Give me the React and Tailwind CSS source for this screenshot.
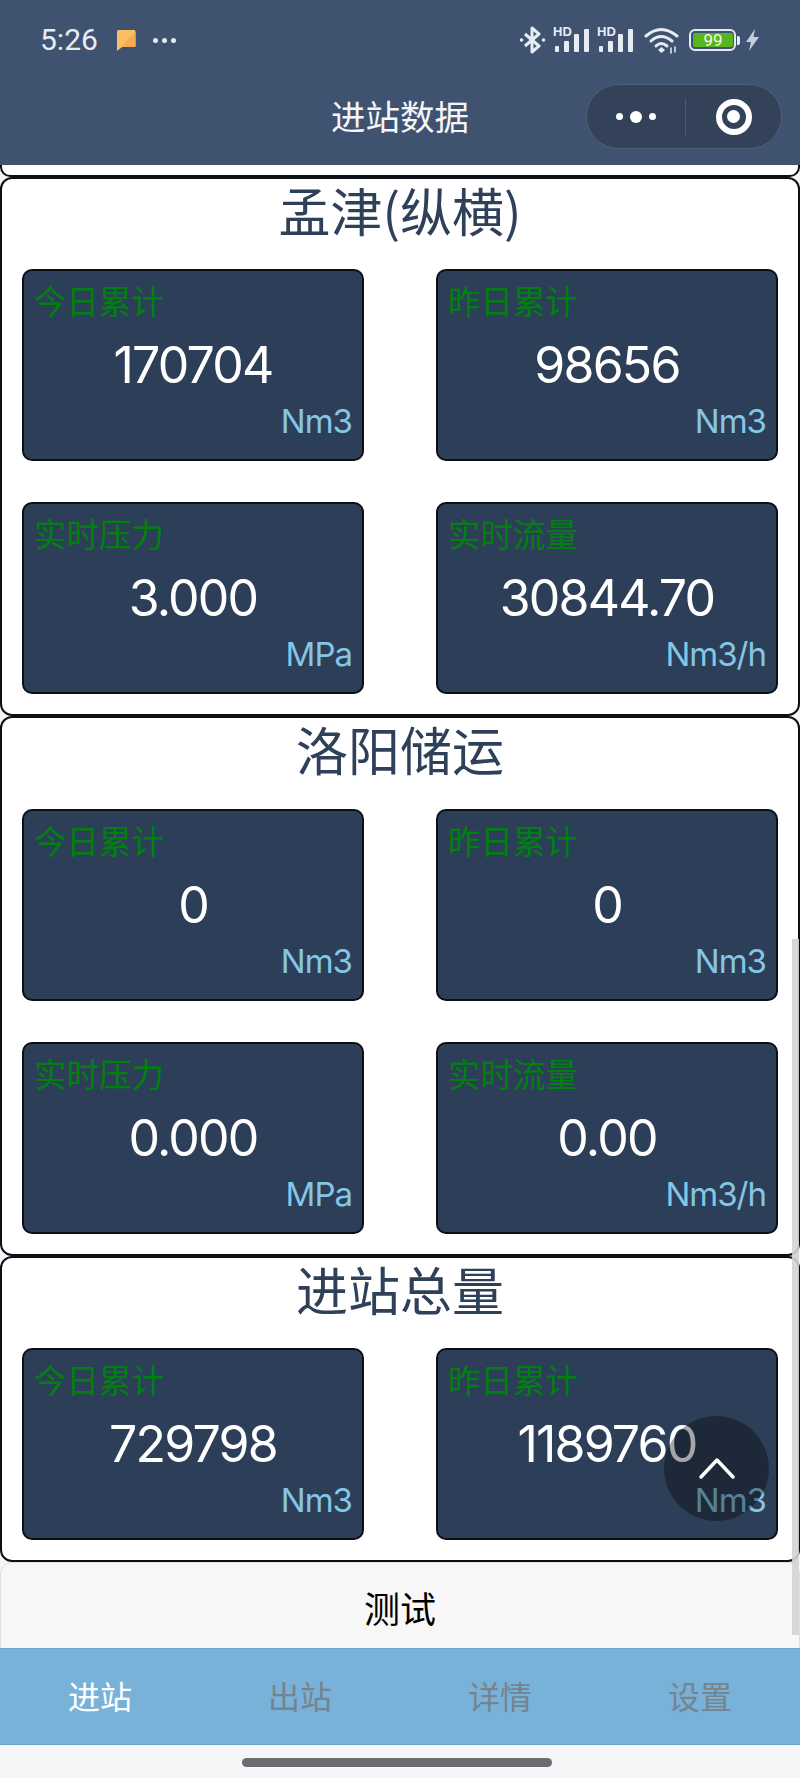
import React from 'react'

const CJK = '"Noto Sans CJK SC", sans-serif'

const stations = [
  {
    name: '孟津(纵横)',
    stats: [
      { label: '今日累计', value: '170704', unit: 'Nm3' },
      { label: '昨日累计', value: '98656', unit: 'Nm3' },
      { label: '实时压力', value: '3.000', unit: 'MPa' },
      { label: '实时流量', value: '30844.70', unit: 'Nm3/h' },
    ],
  },
  {
    name: '洛阳储运',
    stats: [
      { label: '今日累计', value: '0', unit: 'Nm3' },
      { label: '昨日累计', value: '0', unit: 'Nm3' },
      { label: '实时压力', value: '0.000', unit: 'MPa' },
      { label: '实时流量', value: '0.00', unit: 'Nm3/h' },
    ],
  },
  {
    name: '进站总量',
    stats: [
      { label: '今日累计', value: '729798', unit: 'Nm3' },
      { label: '昨日累计', value: '1189760', unit: 'Nm3' },
    ],
  },
]

const tabs = ['进站', '出站', '详情', '设置']

function Signal() {
  return (
    <div className="relative w-[37px] h-[28px] text-[#e6ecf3]">
      <span className="absolute left-[0px] -top-[1px] text-[13px] leading-[13px] font-bold font-['Liberation_Sans',sans-serif]">HD</span>
      <svg width="37" height="28" viewBox="0 0 37 28" fill="currentColor">
        <rect x="2" y="20" width="4" height="6" rx="1" />
        <rect x="11" y="15" width="5" height="11" rx="1" />
        <rect x="21" y="8" width="5" height="18" rx="1" />
        <rect x="31" y="3" width="5" height="23" rx="1" />
      </svg>
    </div>
  )
}

function StatusBar() {
  return (
    <div className="h-[84px] pl-[40px] pr-[40px] pt-[26px] flex justify-between items-start text-[#e6ecf3]">
      <div className="flex items-center h-[28px]">
        <span className="w-[58px] text-[30px] leading-[28px] font-['Roboto',sans-serif]">5:26</span>
        <svg className="ml-[18px]" width="20" height="22" viewBox="0 0 20 22">
          <path d="M1 2.500Q1 1 2.500 1H18Q19.500 1 19.500 2.500V17Q19.500 18 18 18H6L1 22Z" fill="#fbbd68" />
          <path d="M19.500 3V17Q19.500 18 18 18H6L3 20Z" fill="#f7ab4c" />
        </svg>
        <div className="ml-[17px] flex gap-[4px]">
          <span className="w-[5px] h-[5px] rounded-full bg-[#e6ecf3]" />
          <span className="w-[5px] h-[5px] rounded-full bg-[#e6ecf3]" />
          <span className="w-[5px] h-[5px] rounded-full bg-[#e6ecf3]" />
        </div>
      </div>
      <div className="flex items-center h-[28px] gap-[7px]">
        <svg width="27" height="28" viewBox="0 0 27 28" fill="none" stroke="currentColor" strokeWidth="3" strokeLinejoin="round">
          <path d="M6 8L20 20L13 26V2L20 8L6 20" />
          <circle cx="2.500" cy="14" r="1.800" fill="currentColor" stroke="none" />
          <circle cx="24.500" cy="14" r="1.800" fill="currentColor" stroke="none" />
        </svg>
        <Signal />
        <Signal />
        <svg className="ml-[3px]" width="36" height="28" viewBox="0 0 36 28" fill="none" stroke="currentColor" strokeWidth="3" strokeLinecap="round">
          <path d="M2 10Q17 -3 33 10" />
          <path d="M7 15Q17 6 28 15" />
          <path d="M12 20Q17 15 23 20" />
          <path d="M14 24L17.500 27L21 24L17.500 21Z" fill="currentColor" stroke="none" />
          <path d="M27 22V27M31 21V26" strokeWidth="1.500" />
        </svg>
        <div className="ml-[2px] flex items-center">
          <div className="w-[47px] h-[22px] rounded-[6px] border-2 border-[#e6ecf3] p-[2px]">
            <div className="w-[40px] h-full rounded-[2px] bg-[#58b51f] flex items-center justify-center text-[17px] leading-[14px] text-[#f2f7e8] font-['Roboto',sans-serif]">99</div>
          </div>
          <span className="ml-[1px] w-[3px] h-[9px] rounded-r-[2px] bg-[#e6ecf3]" />
        </div>
        <svg className="-ml-[2px]" width="15" height="22" viewBox="0 0 15 22" fill="#c5cfdb">
          <path d="M10 0L1 13H6L4 22L14 8H8.500Z" />
        </svg>
      </div>
    </div>
  )
}

function Header() {
  return (
    <header className="h-[165px] shrink-0 bg-[#3f5370]">
      <StatusBar />
      <div className="h-[65px] relative flex items-center justify-center">
        <span className="text-[34.500px] leading-[50px] -mt-[4px] text-[#f4f6f9] font-['Noto_Sans_CJK_SC',sans-serif]">进站数据</span>
        <div className="absolute right-[18px] top-0 w-[196px] h-[65px] rounded-full bg-[#334259] border border-[#4d5f79] flex items-center">
          <div className="w-[98px] flex items-center justify-center gap-[7px]">
            <span className="w-[7px] h-[7px] rounded-full bg-white" />
            <span className="w-[12px] h-[12px] rounded-full bg-white" />
            <span className="w-[7px] h-[7px] rounded-full bg-white" />
          </div>
          <span className="w-px h-[38px] bg-[#4a5a72]" />
          <div className="flex-1 flex items-center justify-center">
            <div className="w-[36px] h-[36px] rounded-full border-[6px] border-white flex items-center justify-center">
              <span className="w-[13px] h-[13px] rounded-full bg-white" />
            </div>
          </div>
        </div>
      </div>
    </header>
  )
}

function StatCard({ label, value, unit }) {
  return (
    <div className="h-[192px] rounded-[10px] border-2 border-[#0c0f14] bg-[#2d3f58] pl-[10px] pr-[10px] pt-[8px]">
      <div className="text-[32.500px] leading-[42px] text-[#00800f] font-['Noto_Sans_CJK_SC',sans-serif]">{label}</div>
      <div className="mt-[11px] text-center text-[50px] leading-[66px] font-normal tracking-[-1.800px] text-white font-['Inter',sans-serif]">{value}</div>
      <div className="mt-[2px] text-right text-[33px] leading-[42px] font-normal tracking-[-1px] text-[#84c6e6] font-['Inter',sans-serif]">{unit}</div>
    </div>
  )
}

function StationCard({ name, stats }) {
  return (
    <section className="rounded-[12px] border-2 border-[#0c0f14] bg-white px-[20px] pb-[20px]">
      <h2 className="h-[90.330px] text-center text-[52px] leading-[62px] font-normal text-[#2e4159] font-['Noto_Sans_CJK_SC',sans-serif]">
        {name}
      </h2>
      <div className="grid grid-cols-[342px_342px] justify-between gap-y-[41px]">
        {stats.map((s) => (
          <StatCard key={s.label} {...s} />
        ))}
      </div>
    </section>
  )
}

export default function App() {
  return (
    <div className="relative w-[800px] h-[1778px] overflow-hidden bg-[#f6f6f8] flex flex-col" style={{ fontFamily: CJK }}>
      <Header />

      {/* bottom edge of the card scrolled off under the header */}
      <div className="h-[12px] shrink-0 bg-white border-b-2 border-x-2 border-[#0c0f14] rounded-b-[10px]" />

      <main className="flex flex-col">
        {stations.map((st) => (
          <StationCard key={st.name} {...st} />
        ))}
      </main>

      <div className="h-[86px] shrink-0 pt-[3px] rounded-t-[12px] border-x border-t border-[#dfdfe2] flex items-center justify-center text-[36px] text-black bg-[#f7f7f8] font-['Noto_Sans_CJK_SC',sans-serif]">
        测试
      </div>

      <nav className="h-[97px] shrink-0 bg-[#78b2d8] border-y border-[#6fa5c8] grid grid-cols-4">
        {tabs.map((t, i) => (
          <div
            key={t}
            className={`flex items-center justify-center pb-[2px] text-[32px] font-['Noto_Sans_CJK_SC',sans-serif] ${i === 0 ? 'text-white' : 'text-[#75848f]'}`}
          >
            {t}
          </div>
        ))}
      </nav>

      <div className="flex-1 flex justify-center pt-[13px] pr-[6px]">
        <div className="w-[310px] h-[9px] rounded-full bg-[#6b6b70]" />
      </div>

      {/* scrollbar thumb */}
      <div className="absolute right-[1px] top-[939px] w-[7px] h-[696px] bg-[#d5d3d3]/90" />

      {/* back to top */}
      <button className="absolute left-[664px] top-[1416px] w-[105px] h-[105px] rounded-full bg-black/35 flex items-start justify-center pt-[41px]">
        <svg width="38" height="24" viewBox="0 0 38 24" fill="none" stroke="white" strokeWidth="3.500" strokeLinecap="round" strokeLinejoin="round">
          <path d="M3 20L19 3L35 20" />
        </svg>
      </button>
    </div>
  )
}
